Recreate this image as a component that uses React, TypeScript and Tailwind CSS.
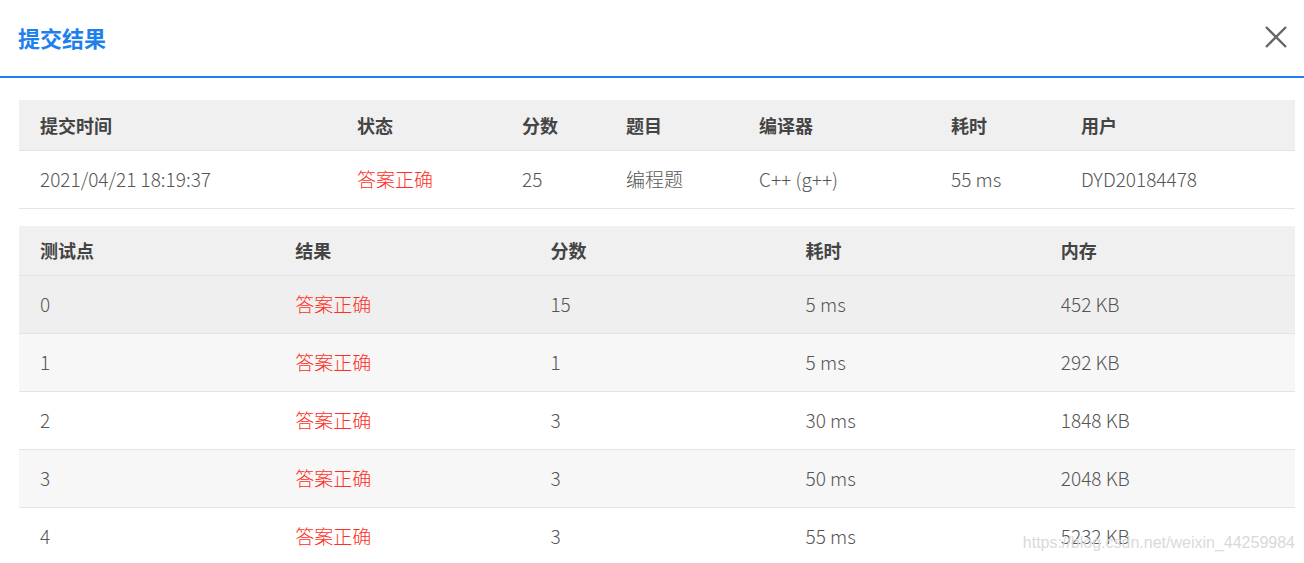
import React from "react";

const font = { fontFamily: '"Noto Sans CJK SC", "Noto Sans", sans-serif' };

const cases = [
  { id: "0", score: "15", time: "5 ms", mem: "452 KB" },
  { id: "1", score: "1", time: "5 ms", mem: "292 KB" },
  { id: "2", score: "3", time: "30 ms", mem: "1848 KB" },
  { id: "3", score: "3", time: "50 ms", mem: "2048 KB" },
  { id: "4", score: "3", time: "55 ms", mem: "5232 KB" },
];

const rowBg = ["bg-[#efefef]", "bg-[#f7f7f7]", "bg-white", "bg-[#f7f7f7]", "bg-white"];

export default function App() {
  return (
    <div className="relative w-[1304px] h-[563px] overflow-hidden bg-white" style={font}>
      <div className="flex h-[78px] items-center justify-between border-b-2 border-[#1e80ec] pb-[3px] pl-[18px] pr-[17px]">
        <div className="text-[22px] font-bold text-[#1e80ec] leading-none">提交结果</div>
        <svg width="22" height="22" viewBox="0 0 22 22" className="text-[#666]">
          <path d="M1 1 L21 21 M21 1 L1 21" stroke="currentColor" strokeWidth="2.4" />
        </svg>
      </div>

      <div className="px-[19px] pt-[22px] pr-[9px]">
        <div>
          <div className="grid h-[51px] grid-cols-[317px_165px_104px_133px_192px_130px_1fr] items-center border-b border-[#e4e4e4] bg-[#f0f0f0] text-[18px] font-bold text-[#444]">
            <div className="pl-[21px]">提交时间</div>
            <div className="pl-[21px]">状态</div>
            <div className="pl-[21px]">分数</div>
            <div className="pl-[21px]">题目</div>
            <div className="pl-[21px]">编译器</div>
            <div className="pl-[21px]">耗时</div>
            <div className="pl-[21px]">用户</div>
          </div>
          <div className="grid h-[58px] grid-cols-[317px_165px_104px_133px_192px_130px_1fr] items-center border-b border-[#e4e4e4] text-[19px] font-light text-[#555]">
            <div className="pl-[21px]">2021/04/21 18:19:37</div>
            <div className="pl-[21px] text-[#ff2e24]">答案正确</div>
            <div className="pl-[21px]">25</div>
            <div className="pl-[21px]">编程题</div>
            <div className="pl-[21px]">C++ (g++)</div>
            <div className="pl-[21px]">55 ms</div>
            <div className="pl-[21px]">DYD20184478</div>
          </div>
        </div>

        <div className="mt-[17px]">
          <div className="grid h-[50px] grid-cols-5 items-center border-b border-[#e4e4e4] bg-[#f0f0f0] text-[18px] font-bold text-[#444]">
            <div className="pl-[21px]">测试点</div>
            <div className="pl-[21px]">结果</div>
            <div className="pl-[21px]">分数</div>
            <div className="pl-[21px]">耗时</div>
            <div className="pl-[21px]">内存</div>
          </div>
          {cases.map((c, i) => (
            <div
              key={c.id}
              className={`grid h-[58px] grid-cols-5 items-center border-b border-[#e4e4e4] text-[19px] font-light text-[#555] ${rowBg[i]}`}
            >
              <div className="pl-[21px]">{c.id}</div>
              <div className="pl-[21px] text-[#ff2e24]">答案正确</div>
              <div className="pl-[21px]">{c.score}</div>
              <div className="pl-[21px]">{c.time}</div>
              <div className="pl-[21px]">{c.mem}</div>
            </div>
          ))}
        </div>
      </div>

      <div
        className="pointer-events-none absolute right-[9px] top-[535px] whitespace-nowrap text-[16px] leading-none text-[#d9d9d9]"
        style={{ fontFamily: '"Liberation Sans", Arial, sans-serif' }}
      >
        https://blog.csdn.net/weixin_44259984
      </div>
    </div>
  );
}
